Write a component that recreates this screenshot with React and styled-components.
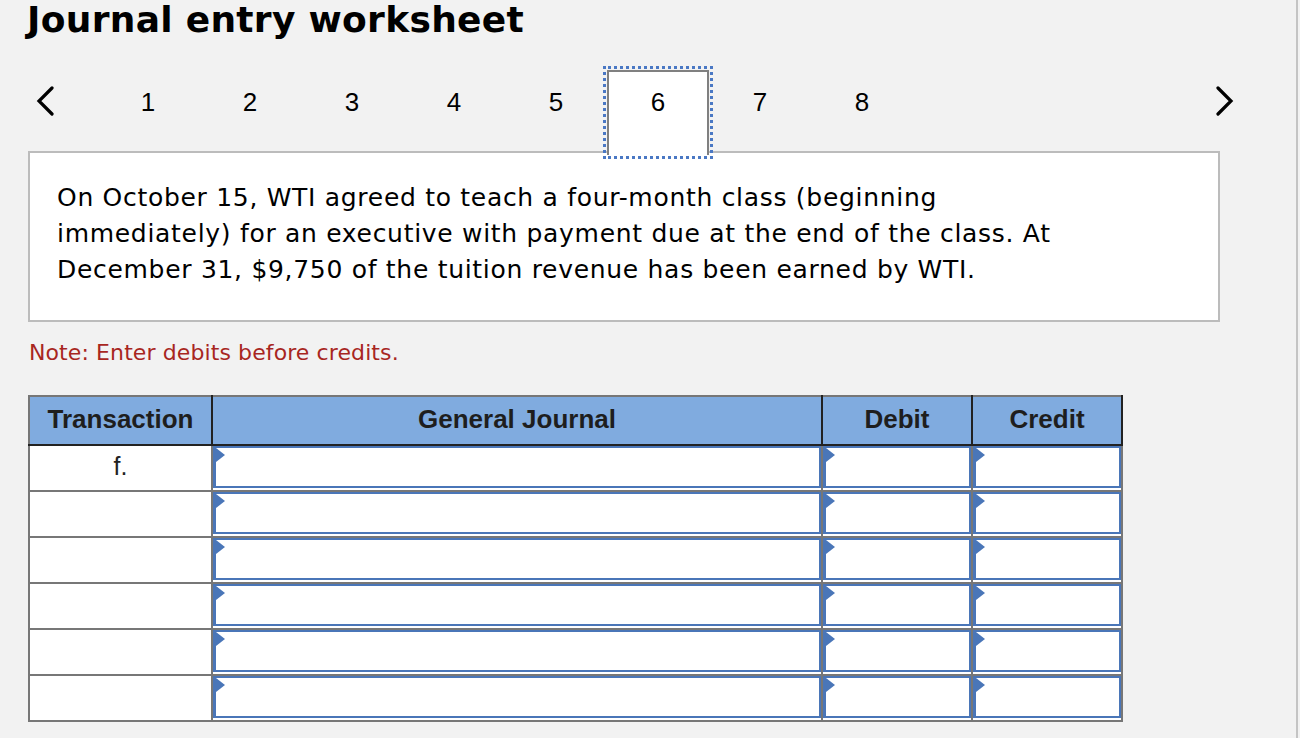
import React from "react";
import styled, { createGlobalStyle } from "styled-components";

const GlobalStyle = createGlobalStyle`
  html, body {
    margin: 0;
    padding: 0;
    background: #f2f2f2;
  }
  * { box-sizing: border-box; }
`;

const Page = styled.div`
  width: 1298px;
  min-height: 738px;
  border-right: 2px solid #c4c4c4;
  background: #f2f2f2;
  font-family: "DejaVu Sans", Verdana, sans-serif;
  color: #000;
`;

const Title = styled.h1`
  margin: 0;
  padding-left: 27px;
  font-family: "DejaVu Sans", Verdana, sans-serif;
  font-weight: bold;
  font-size: 36px;
  line-height: 40px;
  letter-spacing: 0.3px;
`;

const Nav = styled.div`
  display: flex;
  align-items: flex-start;
  margin-top: 30px;
  margin-bottom: -4px;
  padding-left: 28px;
  position: relative;
  z-index: 1;
`;

const Arrow = styled.button`
  width: 36px;
  height: 85px;
  padding: 0;
  padding-top: 16px;
  border: none;
  background: transparent;
  display: flex;
  justify-content: center;
  align-items: flex-start;
  cursor: pointer;
  margin-right: ${p => p.$right ? 0 : "33px"};
`;

const RightSide = styled.div`
  margin-left: auto;
  margin-right: 54px;
`;

const Tab = styled.div`
  width: 102px;
  height: 85px;
  padding-top: 14px;
  text-align: center;
  font-family: "Liberation Sans", Arial, sans-serif;
  font-size: 26px;
  line-height: 32px;
  border: 2px solid ${p => p.$active ? "#808080" : "transparent"};
  border-bottom: none;
  background: ${p => p.$active ? "#fff" : "transparent"};
  outline: ${p => p.$active ? "3px dotted #4a78c4" : "none"};
  outline-offset: 1px;
`;

const Prompt = styled.div`
  margin-left: 28px;
  width: 1192px;
  background: #fff;
  border: 2px solid #bcbcbc;
  padding: 27px 27px 32px;
`;

const PromptText = styled.p`
  margin: 0;
  max-width: 1120px;
  font-size: 25px;
  line-height: 36px;
  letter-spacing: 0.7px;
  white-space: nowrap;
`;

const Note = styled.p`
  margin: 18px 0 0 29px;
  font-size: 22px;
  line-height: 26px;
  letter-spacing: 0.1px;
  color: #a8261f;
`;

const Table = styled.table`
  margin: 29px 0 0 28px;
  border-collapse: collapse;
  table-layout: fixed;
  width: 1093px;
  border: 2px solid #777;
  background: #fff;
`;

const Head = styled.th`
  height: 49px;
  width: ${p => p.$w}px;
  background: #80abdf;
  border: 2px solid #222;
  border-top-color: #777;
  border-left-color: ${p => p.$first ? "#777" : "#222"};
  font-family: "Liberation Sans", Arial, sans-serif;
  font-weight: bold;
  font-size: 26px;
  line-height: 30px;
  color: #1e1e1e;
  text-align: center;
  padding: 0 0 3px;
`;

const Cell = styled.td`
  height: 46px;
  border: 2px solid #777;
  padding: 0;
  vertical-align: top;
  text-align: center;
  font-family: "Liberation Sans", Arial, sans-serif;
  font-size: 25px;
  line-height: 40px;
  color: #222;
`;

const InputWrap = styled.div`
  position: relative;
  height: 42px;
  border: 2px solid #4a76b8;
  border-left-width: 3px;
  background: #fff;
`;

const Flag = styled.span`
  position: absolute;
  left: 0;
  top: 0;
  width: 0;
  height: 0;
  border-top: 7px solid transparent;
  border-bottom: 7px solid transparent;
  border-left: 9px solid #4a76b8;
`;

const Field = styled.input`
  width: 100%;
  height: 100%;
  border: none;
  outline: none;
  background: transparent;
  padding: 0 12px;
  font-family: "Liberation Sans", Arial, sans-serif;
  font-size: 20px;
`;

const Input = () => (
  <InputWrap>
    <Flag />
    <Field type="text" />
  </InputWrap>
);

const Chevron = ({ dir }) => (
  <svg width="20" height="30" viewBox="0 0 20 30">
    <polyline
      points={dir === "left" ? "16,2 3,15 16,28" : "4,2 17,15 4,28"}
      fill="none"
      stroke="#000"
      strokeWidth="3.2"
      strokeLinecap="round"
      strokeLinejoin="miter"
    />
  </svg>
);

const steps = [1, 2, 3, 4, 5, 6, 7, 8];
const rows = ["f.", "", "", "", "", ""];

export default function App() {
  return (
    <Page>
      <GlobalStyle />
      <Title>Journal entry worksheet</Title>
      <Nav>
        <Arrow aria-label="previous">
          <Chevron dir="left" />
        </Arrow>
        {steps.map(n => (
          <Tab key={n} $active={n === 6}>{n}</Tab>
        ))}
        <RightSide>
          <Arrow $right aria-label="next">
            <Chevron dir="right" />
          </Arrow>
        </RightSide>
      </Nav>
      <Prompt>
        <PromptText>
          On October 15, WTI agreed to teach a four-month class (beginning
          <br />
          immediately) for an executive with payment due at the end of the class. At
          <br />
          December 31, $9,750 of the tuition revenue has been earned by WTI.
        </PromptText>
      </Prompt>
      <Note>Note: Enter debits before credits.</Note>
      <Table>
        <thead>
          <tr>
            <Head $w={183} $first>Transaction</Head>
            <Head $w={610}>General Journal</Head>
            <Head $w={150}>Debit</Head>
            <Head $w={150}>Credit</Head>
          </tr>
        </thead>
        <tbody>
          {rows.map((t, i) => (
            <tr key={i}>
              <Cell>{t}</Cell>
              <Cell><Input /></Cell>
              <Cell><Input /></Cell>
              <Cell><Input /></Cell>
            </tr>
          ))}
        </tbody>
      </Table>
    </Page>
  );
}
